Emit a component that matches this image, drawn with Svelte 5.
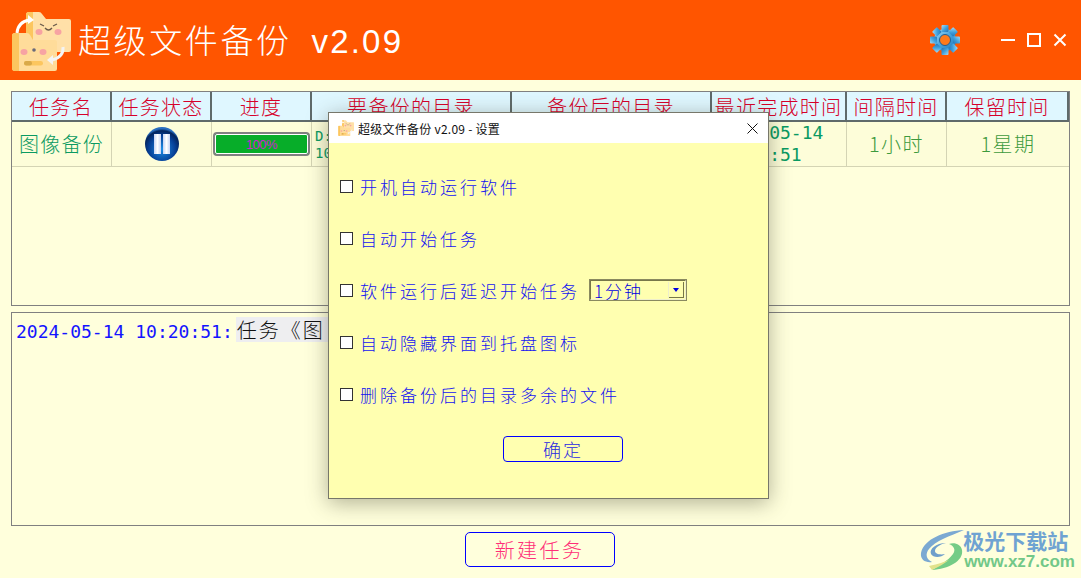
<script>
    const columns = [
        { title: "任务名", width: 100 },
        { title: "任务状态", width: 100 },
        { title: "进度", width: 100 },
        { title: "要备份的目录", width: 200 },
        { title: "备份后的目录", width: 200 },
        { title: "最近完成时间", width: 135 },
        { title: "间隔时间", width: 100 },
        { title: "保留时间", width: 122 },
    ];
    const gridColumns = columns.map((c) => c.width + "px").join(" ");

    const options = [
        { label: "开机自动运行软件" },
        { label: "自动开始任务" },
        { label: "软件运行后延迟开始任务", delay: "1分钟" },
        { label: "自动隐藏界面到托盘图标" },
        { label: "删除备份后的目录多余的文件" },
    ];
</script>

{#snippet folders(size)}
    <svg width={size} height={size} viewBox="0 0 60 60">
        <!-- back folder -->
        <path d="M15 4 q0-3 3-3 h10 q2 0 3 2 l4 5 h23 q2 0 2 2 v29 q0 2-2 2 H15 z" fill="#ffe0a8" />
        <path d="M18 1 h4 v28 h-7 V4 q0-3 3-3 z" fill="#fcc65f" />
        <ellipse cx="28" cy="21" rx="3.5" ry="3" fill="#f7a3a3" />
        <ellipse cx="47" cy="21" rx="3.5" ry="3" fill="#f7a3a3" />
        <path d="M34 17 q3.5 4 7 0" fill="none" stroke="#6a5a4a" stroke-width="1.3" />
        <path d="M29 13 l4 2 M46 13 l-4 2" stroke="#6a5a4a" stroke-width="1.3" />
        <!-- front folder -->
        <path d="M1 25 q0-3 3-3 h12 q2 0 3 2 l3 5 h22 q2 0 2 2 v27 q0 2-2 2 H4 q-3 0-3-3 z" fill="#ffdc9a" />
        <path d="M4 22 h4 v38 H4 q-3 0-3-3 V25 q0-3 3-3 z" fill="#fcc65f" />
        <ellipse cx="13" cy="41" rx="3.5" ry="3" fill="#f7a3a3" />
        <ellipse cx="32" cy="41" rx="3.5" ry="3" fill="#f7a3a3" />
        <circle cx="23" cy="39" r="1.8" fill="#6a6a7a" />
        <rect x="13" y="50" width="19" height="4.5" rx="2.2" fill="#fcc65f" />
        <rect x="13" y="50" width="8" height="4.5" rx="2.2" fill="#d9a94a" />
        <!-- sync arrows -->
        <path d="M6 22 q1-11 12-13" fill="none" stroke="#fff" stroke-width="3" />
        <path d="M17 4 l6 5 -6 4 z" fill="#fff" />
        <path d="M52 36 q1 10-11 13" fill="none" stroke="#f4f4f4" stroke-width="3" />
        <path d="M42 44 l-6 5 6 5 z" fill="#f4f4f4" />
    </svg>
{/snippet}

<main style:--cols={gridColumns}>
    <header class="topbar">
        <div class="brand">
            <span class="logo">{@render folders(60)}</span>
            <h1>超级文件备份 <span class="ver">v2.09</span></h1>
        </div>
        <div class="controls">
            <svg class="gear" width="32" height="32" viewBox="0 0 32 32">
                <defs>
                    <linearGradient id="gearFill" x1="0" y1="0" x2="1" y2="1">
                        <stop offset="0" stop-color="#a6dcf5" />
                        <stop offset="0.55" stop-color="#3f9fdc" />
                        <stop offset="1" stop-color="#2674b4" />
                    </linearGradient>
                </defs>
                <g fill="url(#gearFill)">
                    <circle cx="16" cy="16" r="11" />
                    {#each [0, 45, 90, 135, 180, 225, 270, 315] as angle}
                        <rect x="12.5" y="1" width="7" height="7" rx="1" transform="rotate({angle} 16 16)" />
                    {/each}
                </g>
                <circle cx="16" cy="16" r="5.5" fill="#ff7a1a" stroke="#1f5f94" stroke-width="1" />
            </svg>
            <div class="winbtns">
                <svg width="14" height="14" viewBox="0 0 14 14"><path d="M0 7 H14" stroke="#fff" stroke-width="2" /></svg>
                <svg width="14" height="14" viewBox="0 0 14 14"><rect x="1" y="1" width="12" height="12" fill="none" stroke="#fff" stroke-width="2" /></svg>
                <svg width="14" height="14" viewBox="0 0 14 14"><path d="M1.5 1.5 L12.5 12.5 M12.5 1.5 L1.5 12.5" stroke="#fff" stroke-width="2" /></svg>
            </div>
        </div>
    </header>

    <section class="tasks">
        <div class="row head">
            {#each columns as col}
                <div class="th">{col.title}</div>
            {/each}
        </div>
        <div class="row data">
            <div class="td name">图像备份</div>
            <div class="td">
                <svg width="34" height="34" viewBox="0 0 34 34">
                    <defs>
                        <radialGradient id="pauseFill" cx="0.5" cy="0.65" r="0.6">
                            <stop offset="0" stop-color="#1f8fe6" />
                            <stop offset="0.65" stop-color="#063f96" />
                            <stop offset="0.9" stop-color="#04245c" />
                            <stop offset="1" stop-color="#2a6fc0" />
                        </radialGradient>
                        <linearGradient id="barFill" x1="0" y1="0" x2="1" y2="0">
                            <stop offset="0" stop-color="#c8d4f4" />
                            <stop offset="0.5" stop-color="#ffffff" />
                            <stop offset="1" stop-color="#c8d4f4" />
                        </linearGradient>
                    </defs>
                    <circle cx="17" cy="17" r="17" fill="url(#pauseFill)" />
                    <rect x="9" y="7" width="7" height="20" fill="url(#barFill)" />
                    <rect x="18" y="7" width="7" height="20" fill="url(#barFill)" />
                </svg>
            </div>
            <div class="td">
                <div class="progress">100%</div>
            </div>
            <div class="td path">D:<br />10</div>
            <div class="td path">D:<br />10</div>
            <div class="td time">2024-05-14<br />10:20:51</div>
            <div class="td green">1小时</div>
            <div class="td green">1星期</div>
        </div>
    </section>

    <section class="log">
        <span class="stamp">2024-05-14 10:20:51:</span><span class="msg">任务《图</span>
    </section>

    <footer class="actions">
        <button class="newtask">新建任务</button>
    </footer>

    <div class="watermark">
        <svg width="46" height="42" viewBox="0 0 46 42">
            <path d="M44 1 C24 2 4 10 1 24 C0 31 6 34 12 33 C6 30 5 25 9 20 C15 12 30 7 44 1 z" fill="#7ba9d2" />
            <path d="M26 14 C16 14 9 20 11 25 C13 29 21 29 25 25 C20 26 15 25 15 22 C15 18 21 15 26 14 z" fill="#6f9fcb" />
            <path d="M12 41 C28 40 44 32 42 21 C41 15 34 13 29 15 C34 17 36 21 33 25 C28 32 18 37 12 41 z" fill="#74cc86" />
            <path d="M12 41 C18 38 24 35 29 31 C22 34 14 36 9 37 z" fill="#e2e28a" />
        </svg>
        <div class="wm-text">
            <span class="wm-cn">极光下载站</span>
            <span class="wm-url">www.xz7.com</span>
        </div>
    </div>

    <div class="dialog">
        <div class="dlg-title">
            <span class="dlg-icon">{@render folders(16)}</span>
            <span class="dlg-text">超级文件备份 v2.09 - 设置</span>
            <svg class="dlg-close" width="11" height="11" viewBox="0 0 11 11"><path d="M0.5 0.5 L10.5 10.5 M10.5 0.5 L0.5 10.5" stroke="#111" stroke-width="1" /></svg>
        </div>
        <div class="dlg-body">
            {#each options as opt}
                <div class="opt">
                    <span class="check"></span>
                    <span class="opt-label">{opt.label}</span>
                    {#if opt.delay}
                        <span class="select">
                            <span>{opt.delay}</span>
                            <span class="arrow"></span>
                        </span>
                    {/if}
                </div>
            {/each}
            <button class="ok">确定</button>
        </div>
    </div>
</main>

<style>
    :global(body) {
        margin: 0;
        background: #ffffdc;
    }

    main {
        position: relative;
        width: 1081px;
        height: 578px;
        overflow: hidden;
        background: #ffffdc;
        font-family: "Noto Sans CJK SC", "Liberation Sans", sans-serif;
        font-weight: 300;
    }

    .topbar {
        height: 80px;
        background: #ff5500;
        display: flex;
        align-items: center;
        justify-content: space-between;
    }

    .brand {
        display: flex;
        align-items: center;
        padding-left: 11px;
    }

    .logo {
        display: flex;
        margin-top: 2px;
    }

    h1 {
        margin: -3px 0 0 7px;
        color: #fff;
        font-size: 33px;
        font-weight: 300;
        letter-spacing: 2.6px;
        white-space: pre;
    }

    .ver {
        font-family: "Liberation Sans", sans-serif;
        font-size: 33px;
        letter-spacing: 2.2px;
        margin-left: 10px;
    }

    .controls {
        display: flex;
        align-items: center;
        padding-right: 14px;
    }

    .gear {
        margin-right: 40px;
    }

    .winbtns {
        display: flex;
        gap: 12px;
    }

    .tasks {
        margin: 11px 11px 0 11px;
        height: 215px;
        border: 1px solid #808080;
        box-sizing: border-box;
    }

    .row {
        display: grid;
        grid-template-columns: var(--cols);
    }

    .head {
        height: 30px;
    }

    .th {
        background: #dff7ff;
        border-right: 2px solid #5f6a6a;
        border-bottom: 2px solid #5f6a6a;
        box-sizing: border-box;
        display: flex;
        align-items: center;
        justify-content: center;
        color: #d6002a;
        font-size: 20px;
        letter-spacing: 1.3px;
        white-space: nowrap;
        overflow: hidden;
    }

    .data {
        height: 45px;
    }

    .td {
        background: #fdfdd9;
        border-right: 1px solid #d4d4b4;
        border-bottom: 1px solid #d4d4b4;
        box-sizing: border-box;
        display: flex;
        align-items: center;
        justify-content: center;
        color: #0a9a62;
        font-size: 20px;
        white-space: nowrap;
        overflow: hidden;
    }

    .td:last-child {
        border-right: none;
    }

    .name {
        letter-spacing: 1.3px;
        padding-bottom: 2px;
    }

    .green {
        color: #3d9a3d;
        letter-spacing: 1.5px;
        padding-bottom: 2px;
    }

    .path {
        font-family: "DejaVu Sans Mono", monospace;
        font-size: 14px;
        font-weight: 400;
        line-height: 17px;
        justify-content: flex-start;
        padding: 2px 0 0 3px;
    }

    .time {
        font-family: "DejaVu Sans Mono", monospace;
        font-size: 18px;
        font-weight: 400;
        line-height: 22px;
        justify-content: flex-start;
        padding-left: 3px;
    }

    .progress {
        width: 97px;
        height: 24px;
        box-sizing: border-box;
        background: #07ad29;
        border: 2px solid #808080;
        border-radius: 4px;
        outline: 1px solid #fff;
        outline-offset: -3px;
        display: flex;
        align-items: center;
        justify-content: center;
        color: #d020d0;
        font-family: "Liberation Sans", sans-serif;
        font-size: 13px;
        letter-spacing: -0.5px;
    }

    .log {
        margin: 6px 11px 0 11px;
        height: 214px;
        box-sizing: border-box;
        border: 1px solid #808080;
        background: #ffffdc;
        padding: 4px 4px;
        font-size: 20px;
        line-height: 25px;
        white-space: nowrap;
    }

    .stamp {
        color: #1414ff;
        font-family: "DejaVu Sans Mono", monospace;
        font-size: 18px;
        font-weight: 400;
    }

    .msg {
        display: inline-block;
        height: 25px;
        background: #eeeef0;
        color: #111;
        letter-spacing: 2px;
        margin-left: 3px;
        padding: 0 4px 0 1px;
    }

    .actions {
        display: flex;
        justify-content: center;
        padding: 6px 2px 0 0;
    }

    .newtask {
        width: 150px;
        height: 35px;
        box-sizing: border-box;
        background: transparent;
        border: 1px solid #0000ff;
        border-radius: 5px;
        color: #ff2f78;
        font-family: inherit;
        font-weight: 300;
        font-size: 20px;
        letter-spacing: 2.4px;
        padding: 0;
    }

    /* site stamp sits on top of the window */
    .watermark {
        position: absolute;
        right: 6px;
        bottom: 7px;
        display: flex;
        align-items: center;
        gap: 0;
    }

    .wm-text {
        display: flex;
        flex-direction: column;
        margin-left: -3px;
    }

    .wm-cn {
        color: #6fa3d2;
        font-size: 21px;
        font-weight: 700;
        line-height: 25px;
    }

    .wm-url {
        color: #72c888;
        font-family: "Liberation Sans", sans-serif;
        font-size: 17px;
        font-weight: 700;
        line-height: 18px;
        padding-left: 1px;
    }

    .dialog {
        position: absolute;
        left: 328px;
        top: 112px;
        width: 441px;
        height: 387px;
        box-sizing: border-box;
        border: 1px solid #77776a;
        background: #ffffb0;
        box-shadow: 0 4px 20px rgba(60, 60, 40, 0.4);
        display: flex;
        flex-direction: column;
    }

    .dlg-title {
        height: 30px;
        background: #fff;
        display: flex;
        align-items: center;
        padding: 0 10px 0 9px;
        color: #111;
        font-size: 12px;
        font-weight: 400;
    }

    .dlg-icon {
        display: flex;
    }

    .dlg-text {
        margin-left: 4px;
        font-family: "Noto Sans CJK SC", sans-serif;
        letter-spacing: 0.25px;
        flex: 1;
    }

    .dlg-body {
        display: flex;
        flex-direction: column;
        padding-top: 17px;
    }

    .opt {
        height: 52px;
        display: flex;
        align-items: center;
        padding-left: 11px;
        color: #1414f0;
        font-size: 17px;
        letter-spacing: 3px;
        white-space: nowrap;
    }

    .check {
        width: 11px;
        height: 11px;
        border: 1px solid #333;
        background: #fff;
        margin-right: 7px;
        flex: none;
    }

    .select {
        margin-left: 9px;
        width: 98px;
        height: 22px;
        box-sizing: border-box;
        border: 2px solid;
        border-color: #77774a #eeeecc #eeeecc #77774a;
        outline: 1px solid #8a8a60;
        outline-offset: -1px;
        display: flex;
        align-items: center;
        justify-content: space-between;
        padding: 0 1px 0 3px;
        color: #0000e0;
        font-size: 17px;
        letter-spacing: 2px;
    }

    .arrow {
        width: 15px;
        height: 16px;
        background: #ffffb0;
        border-left: 1px solid #eeeecc;
        box-shadow: inset -1px -1px 0 #77774a;
        position: relative;
    }

    .arrow::after {
        content: "";
        position: absolute;
        left: 4px;
        top: 6px;
        border-left: 3.5px solid transparent;
        border-right: 3.5px solid transparent;
        border-top: 4px solid #0000e0;
    }

    .ok {
        align-self: center;
        margin-top: 16px;
        margin-left: 29px;
        width: 120px;
        height: 26px;
        box-sizing: border-box;
        background: transparent;
        border: 1px solid #0000ff;
        border-radius: 4px;
        color: #2a2ae0;
        font-family: inherit;
        font-weight: 300;
        font-size: 18px;
        letter-spacing: 2px;
        padding: 0;
        line-height: 1;
    }
</style>
